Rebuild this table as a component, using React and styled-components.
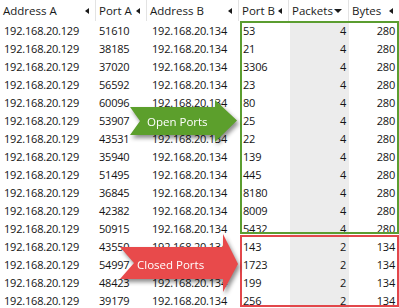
import React from "react";
import styled, { createGlobalStyle } from "styled-components";

const GlobalStyle = createGlobalStyle`
  html, body {
    margin: 0;
    padding: 0;
    background: #ffffff;
  }
  body {
    font-family: "Open Sans", "Noto Sans", sans-serif;
    overflow: hidden;
  }
`;

const rows = [
  ["51610", "53", 4, 280],
  ["38185", "21", 4, 280],
  ["37020", "3306", 4, 280],
  ["56592", "23", 4, 280],
  ["60096", "80", 4, 280],
  ["53907", "25", 4, 280],
  ["43531", "22", 4, 280],
  ["35940", "139", 4, 280],
  ["51495", "445", 4, 280],
  ["36845", "8180", 4, 280],
  ["42382", "8009", 4, 280],
  ["50915", "5432", 4, 280],
  ["43550", "143", 2, 134],
  ["54997", "1723", 2, 134],
  ["48423", "199", 2, 134],
  ["39179", "256", 2, 134],
];

const columns = [
  { title: "Address A", sort: "left" },
  { title: "Port A", sort: "left" },
  { title: "Address B", sort: "left" },
  { title: "Port B", sort: "left" },
  { title: "Packets", sort: "down" },
  { title: "Bytes", sort: "left" },
];

const App = () => {
  return (
    <>
      <GlobalStyle />
      <Grid>
        <HeaderRow>
          {columns.map((col) => (
            <HeaderCell key={col.title}>
              <span>{col.title}</span>
              <SortMark $dir={col.sort} />
            </HeaderCell>
          ))}
        </HeaderRow>

        {rows.map((r, i) => (
          <Row key={i}>
            <Cell $pad={4}>192.168.20.129</Cell>
            <Cell $pad={3}>{r[0]}</Cell>
            <Cell $pad={5}>192.168.20.134</Cell>
            <Cell $pad={4}>{r[1]}</Cell>
            <NumCell $shade>{r[2]}</NumCell>
            <NumCell>{r[3]}</NumCell>
          </Row>
        ))}

        <Frame $color="#5b9d30" $top={21} $height={213} />
        <Frame $color="#e2474b" $top={235} $height={72} />

        {/* callout arrows */}
        <Callout $left={128} $top={98} $w={112} $h={50}>
          <svg width="112" height="50" viewBox="-2 -2 112 50">
            <path
              d="M0 7 L85 7 L85 0 L107 20.5 L85 42 L85 35 L0 35 L10 21 Z"
              fill="#5c9f2c"
            />
          </svg>
          <CalloutText $left={19} $top={23}>Open Ports</CalloutText>
        </Callout>

        <Callout $left={118} $top={232} $w={124} $h={66}>
          <svg width="124" height="66" viewBox="-2 -2 124 66">
            <path
              d="M0 13 L103 13 L103 0 L118 30 L103 58 L103 45 L0 45 L14 29 Z"
              fill="#e84a4b"
            />
          </svg>
          <CalloutText $left={19} $top={32}>Closed Ports</CalloutText>
        </Callout>
      </Grid>
    </>
  );
};

export default App;

const Grid = styled.div`
  position: relative;
  width: 399px;
  height: 308px;
  overflow: hidden;
  color: #141414;
  font-size: 11px;
  letter-spacing: -0.2px;
`;

const cols = "96px 51px 92px 50px 60px 50px";

const HeaderRow = styled.div`
  display: grid;
  grid-template-columns: ${cols};
  height: 21px;
  background: #ffffff;
`;

const HeaderCell = styled.div`
  display: flex;
  align-items: center;
  justify-content: space-between;
  padding: 0 6px 0 3px;
  border-right: 1px solid #e3e3e3;
  font-size: 11.5px;
  color: #1a1a1a;
  letter-spacing: 0;
  white-space: nowrap;
  &:last-child {
    border-right: none;
  }
`;

const SortMark = styled.i`
  display: block;
  width: 0;
  height: 0;
  margin-top: 1px;
  ${(p) =>
    p.$dir === "down"
      ? `
    border-left: 4px solid transparent;
    border-right: 4px solid transparent;
    border-top: 4px solid #1a1a1a;
  `
      : `
    border-top: 3.5px solid transparent;
    border-bottom: 3.5px solid transparent;
    border-right: 4px solid #1a1a1a;
  `}
`;

const Row = styled.div`
  display: grid;
  grid-template-columns: ${cols};
  height: 18px;
  align-items: stretch;
`;

const Cell = styled.div`
  display: flex;
  align-items: center;
  padding-left: ${(p) => p.$pad}px;
  white-space: nowrap;
`;

const NumCell = styled.div`
  display: flex;
  align-items: center;
  justify-content: flex-end;
  padding-right: ${(p) => (p.$shade ? 3 : 4)}px;
  background: ${(p) => (p.$shade ? "#ececec" : "transparent")};
  margin-left: ${(p) => (p.$shade ? 1 : 0)}px;
`;

const Frame = styled.div`
  position: absolute;
  left: 240px;
  top: ${(p) => p.$top}px;
  width: 159px;
  height: ${(p) => p.$height}px;
  box-sizing: border-box;
  border: 2px solid ${(p) => p.$color};
  pointer-events: none;
`;

const Callout = styled.div`
  position: absolute;
  left: ${(p) => p.$left}px;
  top: ${(p) => p.$top}px;
  width: ${(p) => p.$w}px;
  height: ${(p) => p.$h}px;
  filter: drop-shadow(2px 3px 2px rgba(0, 0, 0, 0.45));

  svg {
    display: block;
  }
`;

const CalloutText = styled.span`
  position: absolute;
  left: ${(p) => p.$left}px;
  top: ${(p) => p.$top}px;
  transform: translateY(-50%);
  color: #ffffff;
  font-size: 11.5px;
  letter-spacing: 0;
  white-space: nowrap;
`;
